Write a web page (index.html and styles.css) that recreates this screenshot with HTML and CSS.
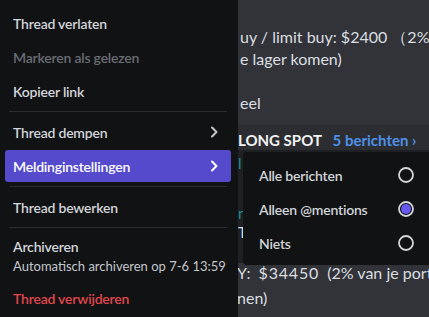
FILE: index.html
```
<!DOCTYPE html>
<html lang="nl">
<head>
    <meta charset="UTF-8">
    <meta name="viewport" content="width=device-width, initial-scale=1.0">
    <title>Thread menu</title>
    <link rel="stylesheet" href="styles.css">
</head>
<body>

    <!-- Chat behind the menu -->
    <div class="chat">
        <p class="line first">uy / limit buy: $2400 （2% van je portfolio)</p>
        <p class="line">e lager komen)</p>
        <p class="line blank">&nbsp;</p>
        <p class="line">eel</p>

        <div class="thread-bar">
            <span class="thread-name">LONG SPOT</span>
            <span class="thread-count">5 berichten ›</span>
        </div>
        <div class="thread-body">
            <p class="bit teal one">l</p>
            <p class="bit teal two">n</p>
            <p class="bit white">T</p>
        </div>

        <p class="line low">Y:&nbsp; <span class="num">$34450</span>&nbsp; (2% van je portfolio)</p>
        <p class="line low second">nen)</p>
    </div>

    <!-- Context menu -->
    <div class="menu">
        <div class="item">Thread verlaten</div>
        <div class="item disabled">Markeren als gelezen</div>
        <div class="item">Kopieer link</div>
        <div class="separator"></div>
        <div class="item">
            <span>Thread dempen</span>
            <svg class="chevron" viewBox="0 0 18 18"><path d="M7 4.5 L11.5 9 L7 13.5" /></svg>
        </div>
        <div class="item active">
            <span>Meldinginstellingen</span>
            <svg class="chevron" viewBox="0 0 18 18"><path d="M7 4.5 L11.5 9 L7 13.5" /></svg>
        </div>
        <div class="separator"></div>
        <div class="item">Thread bewerken</div>
        <div class="separator"></div>
        <div class="item tall">
            <div>
                <div>Archiveren</div>
                <div class="subtext">Automatisch archiveren op 7-6 13:59</div>
            </div>
            <svg class="chevron" viewBox="0 0 18 18"><path d="M7 4.5 L11.5 9 L7 13.5" /></svg>
        </div>
        <div class="item danger">Thread verwijderen</div>
    </div>

    <!-- Submenu -->
    <div class="submenu">
        <div class="item">
            <span>Alle berichten</span>
            <svg class="radio" viewBox="0 0 18 18"><circle cx="9" cy="9" r="7" /></svg>
        </div>
        <div class="item">
            <span>Alleen @mentions</span>
            <svg class="radio checked" viewBox="0 0 18 18"><circle cx="9" cy="9" r="7" /><circle class="dot" cx="9" cy="9" r="5" /></svg>
        </div>
        <div class="item">
            <span>Niets</span>
            <svg class="radio" viewBox="0 0 18 18"><circle cx="9" cy="9" r="7" /></svg>
        </div>
    </div>

</body>
</html>
```

FILE: styles.css
```
* {
    margin: 0;
    padding: 0;
    box-sizing: border-box;
}

body {
    position: relative;
    width: 429px;
    height: 317px;
    overflow: hidden;
    background-color: #313338;
    font-family: Lato, "Noto Sans", sans-serif;
}

/* Chat */
.chat {
    padding-left: 240px;
    padding-top: 26px;
    font-size: 16px;
    color: #dbdee1;
    white-space: nowrap;
}

.line {
    line-height: 22px;
}

.num {
    letter-spacing: 0.8px;
}

.thread-bar {
    margin-top: 11px;
    margin-left: -240px;
    padding: 6px 0 4px 238px;
    height: 25px;
    background-color: #2b2d31;
    font-size: 15px;
    font-weight: bold;
    line-height: 18px;
}

.thread-name {
    color: #f2f3f5;
    margin-right: 7px;
}

.thread-count {
    color: #4f8fe8;
}

.thread-body {
    margin-left: -240px;
    padding-left: 238px;
    height: 113px;
    background-color: #1f2023;
    font-size: 15px;
}

.bit {
    line-height: 18px;
}

.bit.one {
    padding-top: 4px;
}

.bit.two {
    margin-top: 32px;
}

.teal {
    color: #1c8f95;
}

.white {
    color: #dbdee1;
    margin-top: 1px;
}

.line.low {
    margin-left: -3px;
    line-height: 20px;
}

.line.second {
    margin-top: 5px;
}

/* Context menu */
.menu {
    position: absolute;
    left: 0;
    top: 0;
    bottom: 0;
    width: 238px;
    padding: 7px 7px 0 5px;
    background-color: #111214;
}

.item {
    display: flex;
    align-items: center;
    justify-content: space-between;
    height: 32px;
    margin-bottom: 2px;
    padding: 0 8px;
    border-radius: 3px;
    font-size: 14px;
    font-weight: 600;
    letter-spacing: -0.2px;
    white-space: nowrap;
    color: #d2d5da;
}

.item.disabled {
    color: #6a6c73;
}

.item.active {
    background-color: #5549cc;
    color: #ffffff;
}

.item.tall {
    height: auto;
    padding-top: 6px;
    padding-bottom: 4px;
    line-height: 18px;
}

.subtext {
    font-size: 13px;
    font-weight: 400;
    letter-spacing: 0;
    line-height: 20px;
    color: #c4c7cc;
}

.item.danger {
    color: #e0474c;
}

.chevron {
    width: 18px;
    height: 18px;
    fill: none;
    stroke: #c4c7cc;
    stroke-width: 2;
    stroke-linecap: round;
    stroke-linejoin: round;
}

.item.active .chevron {
    stroke: #ffffff;
}

.separator {
    height: 1px;
    margin: 4px 4px;
    background-color: #2a2c31;
}

/* Submenu */
.submenu {
    position: absolute;
    left: 243px;
    top: 152px;
    width: 188px;
    height: 113px;
    padding: 7px 8px;
    border-radius: 4px;
    background-color: #111214;
}

.radio {
    width: 18px;
    height: 18px;
    fill: none;
    stroke: #d2d5da;
    stroke-width: 1.8;
}

.radio .dot {
    fill: #6559f0;
    stroke: none;
}
```
